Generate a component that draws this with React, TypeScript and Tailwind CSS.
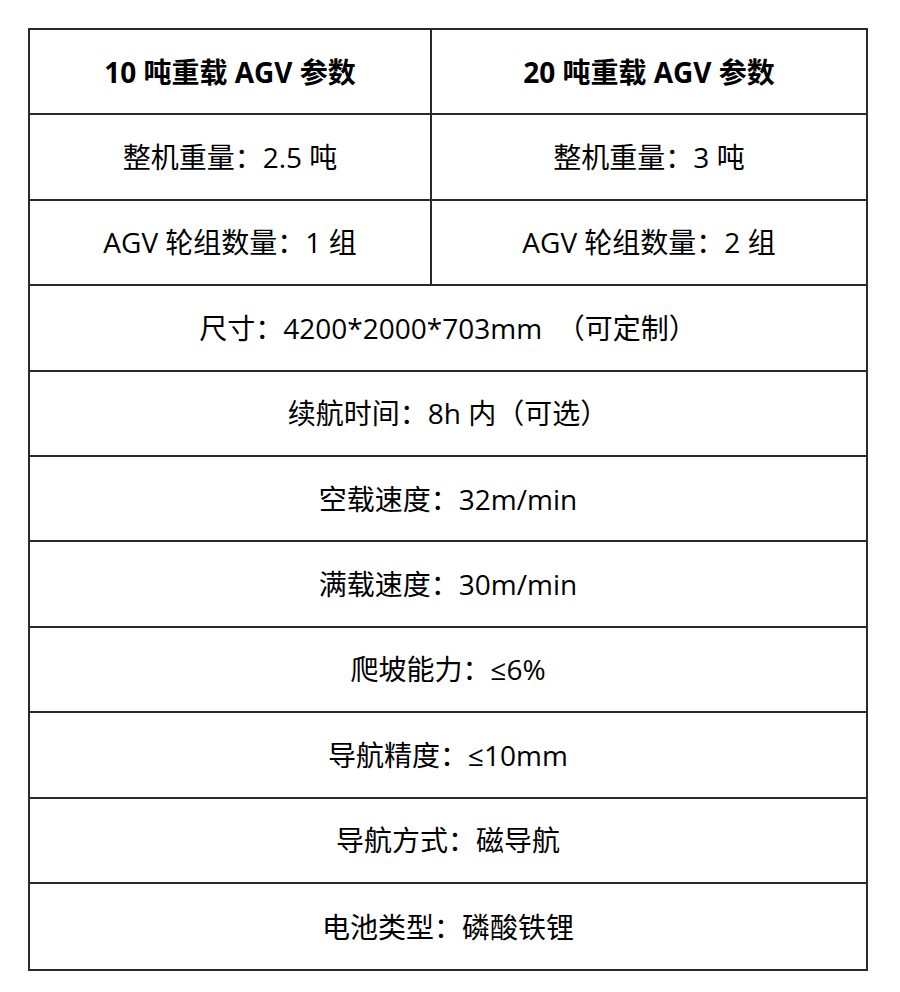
import React from 'react';

const font = { fontFamily: '"Open Sans", "Noto Sans CJK SC", sans-serif' };

const fullRows = [
  '尺寸：4200*2000*703mm  （可定制）',
  '续航时间：8h 内（可选）',
  '空载速度：32m/min',
  '满载速度：30m/min',
  '爬坡能力：≤6%',
  '导航精度：≤10mm',
  '导航方式：磁导航',
  '电池类型：磷酸铁锂',
];

const splitRows = [
  ['整机重量：2.5 吨', '整机重量：3 吨'],
  ['AGV 轮组数量：1 组', 'AGV 轮组数量：2 组'],
];

export default function App() {
  return (
    <div className="w-[900px] h-[992px] bg-white pt-[28px] pl-[28px]" style={font}>
      <div className="w-[840px] border-2 border-[#2a2a2a] text-[28px] text-black">
        <div className="flex h-[85.4px] border-b-2 border-[#2a2a2a] font-bold">
          <div className="w-[402px] flex items-center justify-center border-r-2 border-[#2a2a2a]">
            10 吨重载 AGV 参数
          </div>
          <div className="flex-1 flex items-center justify-center">20 吨重载 AGV 参数</div>
        </div>
        {splitRows.map(([a, b], i) => (
          <div key={i} className="flex h-[85.4px] border-b-2 border-[#2a2a2a]">
            <div className="w-[402px] flex items-center justify-center border-r-2 border-[#2a2a2a]">{a}</div>
            <div className="flex-1 flex items-center justify-center">{b}</div>
          </div>
        ))}
        {fullRows.map((t, i) => (
          <div
            key={i}
            className={
              i === fullRows.length - 1
                ? 'h-[85.4px] flex items-center justify-center whitespace-pre'
                : 'h-[85.4px] flex items-center justify-center whitespace-pre border-b-2 border-[#2a2a2a]'
            }
          >
            {t}
          </div>
        ))}
      </div>
    </div>
  );
}
